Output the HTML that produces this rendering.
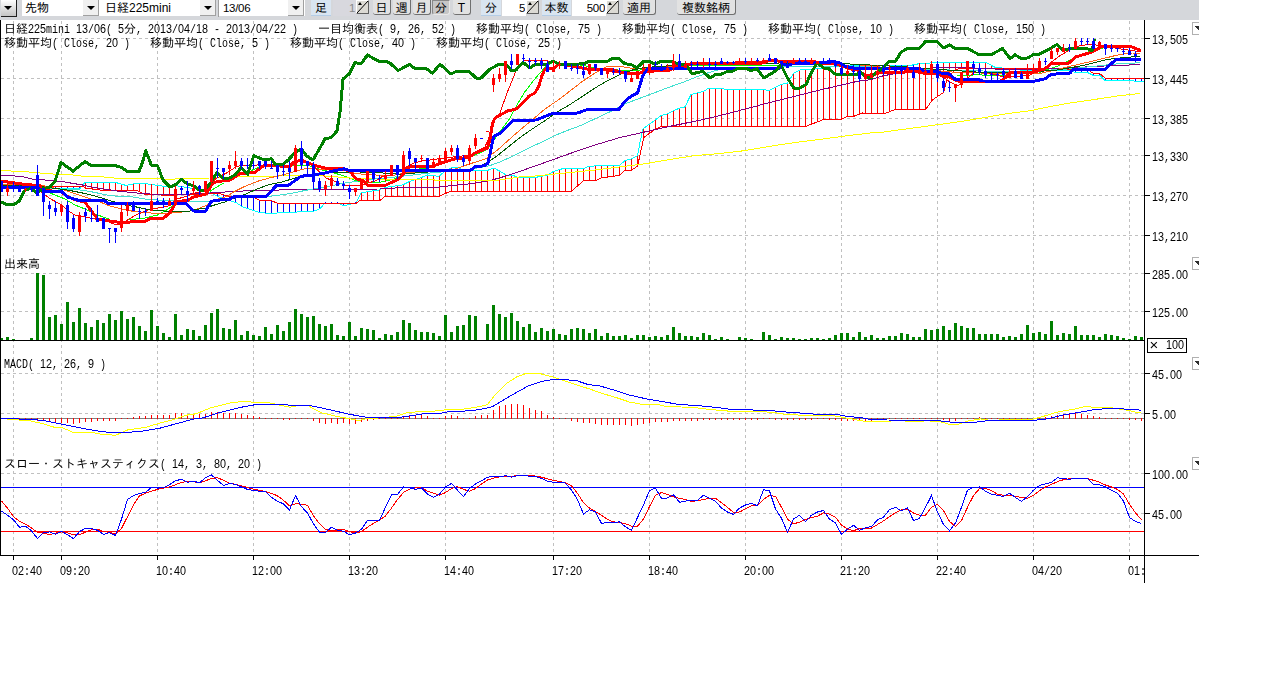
<!DOCTYPE html>
<html lang="ja">
<head>
<meta charset="utf-8">
<title>日経225mini チャート</title>
<style>
html,body{margin:0;padding:0;background:#fff;}
body{width:1280px;height:688px;overflow:hidden;position:relative;font-family:"Liberation Sans","IPAGothic",sans-serif;font-size:12px;color:#000;}
#tb{position:absolute;left:0;top:0;width:1199px;height:20px;background:#d5d7db;}
#tb span{opacity:0.999;display:inline-block;}
#tb div{position:absolute;box-sizing:border-box;white-space:nowrap;overflow:hidden;}
.cb{top:0;height:16px;background:#fff;line-height:17px;padding-left:3px;}
.db{top:0;height:16px;width:16px;background:#f0f0f0;border-right:1px solid #a0a0a0;border-bottom:1px solid #a0a0a0;}
.db:after,.d0:after{content:"";position:absolute;left:4px;top:6px;border-left:4px solid transparent;border-right:4px solid transparent;border-top:4px solid #000;}
.d0{left:1px;top:0;width:16px;height:17px;background:linear-gradient(#fff,#c4c4c4);border-right:1px solid #202020;border-bottom:1px solid #202020;}
.d0:after{left:3px;top:6px;}
.lb{top:0;height:16px;background:#d9e5f1;border-bottom:1px solid #b4cde6;text-align:center;line-height:17px;}
.bt{top:0;height:15px;background:#e2e2e2;border-right:1px solid #707070;border-bottom:1px solid #707070;border-radius:0 0 3px 3px;text-align:center;line-height:17px;}
.bt.on{background:#c6c6c6;border:1px solid #888;border-right-color:#e8e8e8;border-bottom-color:#e8e8e8;line-height:15px;}
.fd{top:0;height:16px;background:#fff;text-align:right;line-height:17px;padding-right:1px;}
.mono{font-family:"Liberation Sans","IPAGothic",sans-serif;letter-spacing:-0.3px;font-size:11.5px;}
.sp{top:0;width:13px;height:14px;background:#dcdad4;border:1px solid #606060;border-left-color:#fff;border-top-color:#fff;}
#chart{position:absolute;left:0;top:0;}
#chart text{white-space:pre;}
#chart .la{font-family:"Liberation Mono","IPAGothic",monospace;font-size:13px;}
#chart .dg{font-family:"Liberation Sans","IPAGothic",sans-serif;font-size:13px;}
#chart .cj{font-family:"Liberation Mono","IPAGothic",monospace;font-size:12px;}
</style>
</head>
<body>
<div id="tb">
<div class="d0"></div>
<div class="cb" style="left:22px;width:78px;"><span>先物</span></div><div class="db" style="left:83px;"></div>
<div class="cb" style="left:100px;width:116px;padding-left:5px;"><span>日経225mini</span></div><div class="db" style="left:200px;"></div>
<div style="left:218px;top:0;width:1px;height:17px;background:#a0a0a0;"></div>
<div class="cb mono" style="left:219px;width:86px;padding-left:4px;"><span>13/06</span></div><div class="db" style="left:288px;"></div>
<div class="lb" style="left:311px;width:20px;"><span>足</span></div>
<div class="fd mono" style="left:333px;width:23px;background:#d8d8de;color:#8a8a8a;"><span>1</span></div>
<div class="sp" style="left:356px;"><svg width="11" height="12" viewBox="0 0 11 12" style="display:block"><path d="M0 12L11 0" stroke="#000" fill="none"/><path d="M1 4l2-3l2 3z" fill="#000"/></svg></div>
<div class="bt" style="left:373px;width:18px;"><span>日</span></div>
<div class="bt" style="left:393px;width:18px;"><span>週</span></div>
<div class="bt" style="left:413px;width:18px;"><span>月</span></div>
<div class="bt on" style="left:432px;width:18px;"><span>分</span></div>
<div class="bt" style="left:453px;width:18px;"><span>T</span></div>
<div class="lb" style="left:481px;width:20px;"><span>分</span></div>
<div class="fd mono" style="left:502px;width:24px;"><span>5</span></div>
<div class="sp" style="left:526px;"><svg width="11" height="12" viewBox="0 0 11 12" style="display:block"><path d="M0 12L11 0" stroke="#000" fill="none"/><path d="M1 4l2-3l2 3z" fill="#000"/></svg></div>
<div class="lb" style="left:542px;width:29px;"><span>本数</span></div>
<div class="fd mono" style="left:572px;width:34px;"><span>500</span></div>
<div class="sp" style="left:606px;"><svg width="11" height="12" viewBox="0 0 11 12" style="display:block"><path d="M0 12L11 0" stroke="#000" fill="none"/><path d="M1 4l2-3l2 3z" fill="#000"/></svg></div>
<div class="bt" style="left:623px;width:33px;"><span>適用</span></div>
<div class="bt" style="left:677px;width:59px;"><span>複数銘柄</span></div>
</div>
<svg id="chart" width="1280" height="688" viewBox="0 0 1280 688">
<g shape-rendering="crispEdges" fill="none">
<g stroke="#c0c0c0" stroke-width="1" stroke-dasharray="3,3">
<line x1="13.5" y1="21" x2="13.5" y2="555"/>
<line x1="61.5" y1="21" x2="61.5" y2="555"/>
<line x1="157.5" y1="21" x2="157.5" y2="555"/>
<line x1="253.5" y1="21" x2="253.5" y2="555"/>
<line x1="349.5" y1="21" x2="349.5" y2="555"/>
<line x1="445.5" y1="21" x2="445.5" y2="555"/>
<line x1="553.5" y1="21" x2="553.5" y2="555"/>
<line x1="649.5" y1="21" x2="649.5" y2="555"/>
<line x1="745.5" y1="21" x2="745.5" y2="555"/>
<line x1="841.5" y1="21" x2="841.5" y2="555"/>
<line x1="937.5" y1="21" x2="937.5" y2="555"/>
<line x1="1033.5" y1="21" x2="1033.5" y2="555"/>
<line x1="1129.5" y1="21" x2="1129.5" y2="555"/>
<line x1="1" y1="38.5" x2="1144" y2="38.5"/>
<line x1="1" y1="78.5" x2="1144" y2="78.5"/>
<line x1="1" y1="118.5" x2="1144" y2="118.5"/>
<line x1="1" y1="155.5" x2="1144" y2="155.5"/>
<line x1="1" y1="195.5" x2="1144" y2="195.5"/>
<line x1="1" y1="235.5" x2="1144" y2="235.5"/>
<line x1="1" y1="273.5" x2="1144" y2="273.5"/>
<line x1="1" y1="311.5" x2="1144" y2="311.5"/>
<line x1="1" y1="373.5" x2="1144" y2="373.5"/>
<line x1="1" y1="413.5" x2="1144" y2="413.5"/>
<line x1="1" y1="473.5" x2="1144" y2="473.5"/>
<line x1="1" y1="513.5" x2="1144" y2="513.5"/>
</g>
<path d="M85.5 182V188M91.5 182V189M97.5 182V190M103.5 182V190M109.5 182V190M115.5 182V190M121.5 184V190M127.5 185V190M133.5 184V190M139.5 183V192M145.5 184V194M151.5 184V195M157.5 185V195M163.5 186V195M169.5 186V195M175.5 186V195M181.5 187V195M187.5 188V195M193.5 189V195M199.5 190V194M205.5 191V193M361.5 193V200M367.5 192V200M373.5 191V201M379.5 190V201M385.5 187V196M391.5 187V196M397.5 186V196M403.5 185V196M409.5 182V196M415.5 180V196M421.5 177V196M427.5 175V196M433.5 176V196M439.5 176V196M445.5 171V193M451.5 168V192M457.5 168V192M463.5 170V192M469.5 170V192M475.5 170V192M481.5 170V192M487.5 170V192M493.5 168V192M499.5 171V192M505.5 175V192M511.5 175V192M517.5 178V192M523.5 178V192M529.5 178V192M535.5 177V192M541.5 176V192M547.5 175V192M553.5 171V192M559.5 170V192M565.5 168V192M571.5 168V191M577.5 168V186M583.5 168V181M589.5 166V181M595.5 166V181M601.5 166V178M607.5 166V177M613.5 166V176M619.5 166V175M625.5 160V170M631.5 159V170M637.5 156V166M643.5 128V139M649.5 124V133M655.5 120V129M661.5 115V126M667.5 114V126M673.5 111V126M679.5 108V126M685.5 106V126M691.5 94V126M697.5 93V126M703.5 91V126M709.5 88V126M715.5 88V126M721.5 88V126M727.5 89V126M733.5 89V126M739.5 89V126M745.5 89V126M751.5 89V126M757.5 89V126M763.5 89V126M769.5 90V126M775.5 87V126M781.5 84V126M787.5 83V126M793.5 73V126M799.5 70V126M805.5 70V126M811.5 69V124M817.5 69V122M823.5 68V120M829.5 67V119M835.5 66V119M841.5 66V119M847.5 66V116M853.5 66V116M859.5 66V114M865.5 66V113M871.5 65V113M877.5 65V113M883.5 65V113M889.5 66V112M895.5 66V110M901.5 66V110M907.5 66V110M913.5 65V110M919.5 64V110M925.5 63V110M931.5 63V101M937.5 63V96M943.5 62V92M949.5 62V75M955.5 62V70M961.5 62V69M967.5 62V69M973.5 62V69M979.5 62V69M985.5 62V69M991.5 65V69M997.5 68V69" stroke="#f00" stroke-width="1"/>
<path d="M43.5 186V188M49.5 186V189M55.5 186V189M61.5 186V189M67.5 186V189M73.5 186V189M79.5 186V189M211.5 192V194M217.5 194V196M223.5 195V199M229.5 196V201M235.5 196V202M241.5 196V206M247.5 196V209M253.5 197V211M259.5 200V212M265.5 200V213M271.5 201V213M277.5 203V213M283.5 203V212M289.5 203V212M295.5 203V212M301.5 203V212M307.5 203V212M313.5 203V211M319.5 203V209M325.5 202V204M331.5 202V204M337.5 202V204M343.5 203V205M349.5 203V204M355.5 202V204M1003.5 68V70M1009.5 68V70M1015.5 68V70M1021.5 69V70M1027.5 69V70M1033.5 69V70M1039.5 69V71M1045.5 69V71M1051.5 69V71M1057.5 69V71M1063.5 69V71M1069.5 69V71M1075.5 69V72M1081.5 69V72M1087.5 69V72M1093.5 73V75M1099.5 74V76M1105.5 78V80M1111.5 78V80M1117.5 78V80M1123.5 78V80M1129.5 78V80M1135.5 78V81M1141.5 78V81" stroke="#00f" stroke-width="1"/>
<polyline points="1,185 25,188 62,189 80,188.5 85,182.5 115,182.2 120,183.8 126,185.4 138.8,183 151,184.4 163.8,186.3 175,185.6 195,188.8 207.5,191.3 217.5,196.3 227.5,200 236,202.5 242.5,206.9 251,209.8 258.8,212.3 270,213.6 282.5,212.5 312.5,211.5 320,208.8 325,203 337.5,203 343.8,205.6 356,203 361,193 370,191.3 378.8,190 385,187.5 402.5,185 408.8,181.9 420,178 427.5,175 438.8,176.3 445,171.3 451,168 457.5,167.5 463.8,170 475,170.4 487.5,170.4 493.8,168 500,171.3 506,175 512.5,175 517.5,177.5 535,177.5 547.5,175 553.8,171.3 565,168 570,168.5 583.8,168.5 588.8,166.3 601,165.6 619.4,165.6 625,160.6 631,159 637.5,155.6 640,142.5 643,128.8 650,123.8 656,119.4 661,115.6 667.5,113.8 673.8,110.6 680,108 685,106.9 691,94.4 703.8,91.3 708.8,88 720,88 725,89.4 763.8,89.4 768.8,90.6 775,87.5 781,84.4 787.5,83 793.8,73 800,70 812,69.4 823.8,68 836,66.3 870,65.4 882.5,65.4 907.5,66 920,63.5 940,62.5 986,62.5 995,67.3 1007.5,68.5 1020,70 1038.8,70.6 1070,70.6 1075,72.5 1087.5,72.5 1093.8,75.6 1100,75.6 1105,80.4 1132.5,80.4 1135,81.3 1144,81.3" stroke="#0ff" stroke-width="1"/>
<polyline points="1,184 42,186 83,186.5 85,188 100,190 120,190 136,190 145,194.4 161,195 175,195 195,194.5 210,193 220,193.8 228.8,196.3 252.5,196.5 258.8,200 271.3,200.6 277.5,203.3 356,203.3 360,200.4 380,200.6 385,196.3 438.8,196.3 450,191.5 571,191.5 583.8,180.6 596,180.6 601,178 619.4,175.3 625,170.3 631,170.3 637.5,166.3 640,155 643.8,137.5 650,133 656,128.8 661,126.5 806,126.3 823.8,119.4 841,119.4 847.5,116.3 853.8,116.3 862.5,113 885,113.5 895,109.5 925.6,109.5 932.5,99.8 943.8,92.3 947.5,77.3 955,69.8 960,68.5 1045,68.8 1087.5,69.4 1092.5,73 1100,73.8 1105,78 1144,78" stroke="#f00" stroke-width="1"/>
<polyline points="30,186 33,186.5 45,191 55,195 65,199 75,205 85,209 95,214 105,217.6 110,219.6" stroke="#0f0" stroke-width="1"/>
<polyline points="127.5,220 145,218 157.5,215 167.5,209.4 173.8,205" stroke="#0f0" stroke-width="1"/>
<polyline points="210,191.3 220,185 223.8,183" stroke="#0f0" stroke-width="1"/>
<polyline points="251,170.6 257.5,168 262,166.8" stroke="#0f0" stroke-width="1"/>
<polyline points="282.5,167 295,165.6 300,165.6 307.5,165 320,169.4 332.5,172.5 345,176.3 357.5,181.3 370,183 382.5,181.9 395,178.8 407.5,172.5 420,168.8 430,167.5 445,161 475,155 487.5,149.4 495,138.8 501,130 508.8,120 516,106.8 524,93 532.5,81.8 540,73 545,67.4 552.5,62.4" stroke="#0f0" stroke-width="1"/>
<polyline points="580,65 600,68.5 630,71 660,68 690,65.5 720,65.5 760,65.5 778,65.5" stroke="#0f0" stroke-width="1"/>
<polyline points="957.5,76 976,74.8 995,75.4 1010,75" stroke="#0f0" stroke-width="1"/>
<polyline points="1039,72.5 1057.5,66.3 1070,60 1082.5,53.8 1095,50 1107.5,46.9" stroke="#0f0" stroke-width="1"/>
<polyline points="1136,48 1141,49.6" stroke="#0f0" stroke-width="1"/>
<polyline points="1,175.3 10,175.6 22,176.6 32,179.1 40,179.6 52,180.6 64,181.9 74,183.6 83,185.1 95,187.6 108,189.6 118,191.1 128,192.1 132.5,192.5 145,193.8 161,194.4 190,194 220,192.5 232.5,191.3 270,190.2 307.5,189.4 380,189 395,188 430,187.3 435,187.5 451,185.6 470,183.8 490,180.6 507.5,175.6 520,171.3 532.5,166.9 545,162.5 557.5,158 570,153.5 595,145 620,137.5 645,131.9 670,126.3 695,121.3 720,115.6 730,113 770,102.5 820,90 857.5,81.3 870,79.8 882.5,76 895,73.5 920,69.8 935,67.3 957.5,67.3 995,69 1020,70 1070,67.8 1107.5,65.8 1140,64.6" stroke="#800080" stroke-width="1"/>
<polyline points="1,170.6 10,170.6 13,171.6 28,171.6 30,172.6 40,172.9 42,173.8 58,174.1 70,174.6 83,176.3 100,176.6 118,178.4 128,178.6 157.5,178.5 167.5,179.4 175,179 210,178 226,177.3 252.5,176.5 280,176 320,175.6 350,178 370,178.8 395,179.4 430,179.4 438.8,180.6 495,180.6 507.5,178.8 520,176.9 532.5,176.3 545,175 557.5,173.8 570,172.5 595,170 620,166.9 645,163.8 670,159.4 695,155.6 720,153.5 745,150.6 770,146.3 795,142.5 820,139.4 845,136 870,133 880,132.5 957.5,122 982.5,117.9 1007.5,113.5 1030,110.8 1045,107.5 1070,103 1095,99.4 1120,95.6 1140,93.5" stroke="#ff0" stroke-width="1"/>
<polyline points="1,184.5 40,185 64,190 76,194 90,198.6 100,202 110,206 120,208.6 128,210 132.5,211.3 145,212.5 161,213.8 172.5,213 188.8,211.3 197.5,208.8 206,205.6 215,200 227.5,196.3 232.5,192.5 245,186.3 257.5,181.3 270,177.8 282.5,175 295,171.3 307.5,168 320,169.4 345,170.6 357.5,173.8 376,175 395,175 407.5,172.5 430,171.3 454,169.4 470,163.8 486,158.8 497.5,150 510,138.8 520,130 531,121 545,109 557.5,100.5 570,91 582.5,81.3 595,73 606,66.9 620,66.3 635,68.8 660,67 700,64.5 740,63 780,61.5 820,62 850,64 880,67 920,69 952,72 995,73.5 1020,74 1039,73.8 1070,66.3 1095,60.6 1120,54.4 1132.5,53 1140,53" stroke="#ff6414" stroke-width="1"/>
<polyline points="1,182.5 30,185 43,193.5 50,198.6 60,204 70,212 75,215 85,217 95,219 105,220 115,224.6 120,225 127.5,220 136,215 145,211.3 150,209.4 161,207.5 170,205.6 176,199.4 186,196.3 195,193 200,192.5 207.5,188.8 211,185 215,179.4 220,176.3 227.5,172.5 235,167.5 240,165.6 257.5,165 280,165.6 289,165 295,160 307.5,162 314,166.3 320,172.5 326,178 332.5,180.6 345,185 357.5,185.6 364,184.4 370,182.5 376,180.6 382.5,176.3 390,175 401,171.3 407.5,166.3 413.8,163 426,160 430,160 445,158 470,155 485,147 492,130 495,120 499,115.5 507.5,91.8 516,71 524,61 545,60.5 557.5,63 570,66.8 580,68 600,70 625,74 640,72 655,68 675,65 690,63 720,62.5 765,61 780,60.5 815,62 840,65 855,70 865,75 875,73 900,72 920,71 940,75 950,82 958,86 965,80 975,72 985,72 1000,76 1015,77 1030,75 1045,67.5 1051,62.5 1061,55 1070,50 1080,45.6 1090,44.4 1101,45.6 1120,48.8 1132.5,50.6 1140,51.9" stroke="#f00" stroke-width="1"/>
<polyline points="1,186.5 40,187.5 64,189.5 80,190 90,191.5 100,193.5 110,195.6 120,196.5 132.5,196.9 145,199 157.5,200 170,200.3 191,201.5 210,201.5 216,200 233,197.5 267.5,196 270,196.3 288.8,193.8 307.5,190 325,186.9 345,183 365,180 390,177.5 407.5,175.6 430,173 470,169.4 490,165.6 500,161.9 512.5,156.3 532.5,146.3 545,140.6 557.5,134.4 570,129.4 580,125.8 595,118.8 611,111.3 625,103.8 645,96.3 670,86.9 682.5,82.5 695,77.5 707.5,73 717.5,70 740,68 800,66.5 860,66.5 900,68 950,70 1000,71.5 1020,71.9 1070,68.8 1095,66.2 1120,63.6 1140,62.8" stroke="#40e0d0" stroke-width="1"/>
<polyline points="1,185 40,186.5 56,188.5 70,190.5 85,193.5 95,196 105,199 113,201.6 125,205 136,206.9 145,208.8 157.5,210.6 172.5,211.5 189,211.4 196.3,209.3 204.7,208.5 210.4,206.4 216,204.5 224,202.3 232,199 245,194.4 257.5,188.8 270,184.4 282.5,181.9 295,178 307.5,175 330,172.5 357.5,171.9 382.5,173 401,174.4 420,172.5 470,169.4 485,163.8 495,157.5 507.5,147.5 520,137.5 532.5,128.8 545,120.6 557.5,111.8 570,104.5 582.5,96.3 595,88 607.5,80.6 620,74.4 632.5,70 645,67.5 680,65 720,64 780,63 840,63.5 870,65 900,66.5 940,69.5 976,72 1000,73 1030,72 1057.5,70 1082.5,65.6 1107.5,59.4 1120,58 1132.5,56.9 1140,56.3" stroke="#005a00" stroke-width="1"/>
<polyline points="1,181 25,184.5 40,185.6 43,190.5 61,191.5 68,197 78,200.5 85,202.2 92,212 97.6,218.9 108,220.7 120,222.5 145,221.3 150,218.8 163.8,218 170,212.5 175,204.4 177.5,201.3 187.5,200.6 192.5,197.5 206.3,193.8 210,187.5 213,182.5 220,181.3 230,180 235,176.9 240,173.8 246.3,173 254.4,172.5 258.8,169.4 263.8,165.6 270,165 282.5,166.3 289,167 295,162 301,160 307.5,162.5 315,165.6 325,168 342.5,168.8 350,171.3 356,178.8 362.5,180.6 367.5,185 386,185 390,183 396,180.6 400,177.5 404.4,172.5 407.5,167.5 412.5,166.3 420,166.9 432.5,166.5 438.8,163.8 445,161.9 455,158.8 468.8,157.5 475,153 487.5,148 490,138.8 492.5,123.5 495,118 507.5,111 516,109 524,101.8 529,96 535,93 539,85.5 542,75.5 545,69 554,68.6 557.5,64.5 570,64.4 576,66.9 588.8,69.4 612.5,70 625,73 640,73 650,71.3 670,70 676,66.9 686,66.3 691,63.8 720,63.5 763.8,63 770,60 776,60 780,61.9 815,61.9 820,63 836,63.8 845,66.9 850,68.8 857.5,70 865,75 873.8,75 877.5,72.9 901,72.9 906,71.6 920,71.6 925,73.5 937.5,73.5 943.8,76.6 948.8,76.6 955,79.8 960,81.6 1000,81.6 1003.8,79 1011,72.3 1020,72.5 1032.5,72.5 1045,68.8 1051,63.8 1068.8,63 1076,56.9 1092.5,51.9 1101,46.9 1105,46.3 1130,46.3 1141,50.6" stroke="#f00" stroke-width="3" stroke-linejoin="round"/>
<polyline points="1,187.3 36,187.3 43,191.1 61,191.1 68,197.1 78,200.2 103.3,200.2 108.3,203.3 186.3,203.5 193.8,211 205.6,211 211.3,201.3 220,200 228.8,199.8 233.8,196.9 266.3,196.5 276.3,185.6 288.8,185 301,176.3 312.5,175 325,173 335,170.6 343.8,168.8 350,170.6 470,170.6 475,166.9 485,165.6 488,163 490,153.8 492,143.8 493.8,136.3 501.3,132.5 513,120.6 536,120 551,114 570,113.5 577.5,113 587.5,109.4 618.8,109.4 625,101.3 631,96.3 637.5,93 640,85 642.5,76.3 647.5,68.8 778.8,68.5 782.5,63.8 787.5,65.6 795,63 813.8,63 823.8,62.5 832.5,61.3 840,63 845,66.3 857.5,68.8 920,68.8 925,71.6 936,71.6 942.5,73.5 948.8,74 956,79.8 978.8,79.8 982.5,81 1033.8,81.3 1045,78.8 1051,74.4 1070,73 1072.5,70 1105,69.4 1116,59.4 1141,59.4" stroke="#00f" stroke-width="3" stroke-linejoin="round"/>
<polyline points="1,202 7,204.7 13,205 19,201.2 25,190 31,188.6 37,193 43,188.6 49,187.5 55,181.5 61,162.5 73,171.1 85,161.5 91,165.5 115,165.5 121,167.3 127,171.3 139,171.3 142.5,162.5 145.6,150.6 151.3,165 157.5,165.6 163,180 170,186.9 175,185 181.3,179.4 187.5,183.8 193,185.6 199.4,190 205,190 211.3,181.9 217,172.5 223,178 229.4,178 235,175 241.3,167.5 247.5,174.4 253.8,155.6 259.4,158 265,160 271.3,158.8 275,164.4 282.5,165 288.8,159.4 295,152.5 301.3,148.8 307,156.3 313,160 318.8,150 325,138.8 331,137.5 337,131 340,112 343,79 349.4,73.8 355,62.5 361,63.8 367.5,55 378.8,61.3 386,61.3 390,63 398,70.6 409.4,64.4 415,68.5 426,68.5 432.5,73.3 440,64.2 451,74 457,71 468.8,71 476,78 481,78 490,69 498.8,64.5 506,64.5 512,71 516,70 523,62.4 530,68 535,64.5 546,64.5 553,61 559,64 570,64.4 583.8,63.8 588.8,61.3 607.5,61.3 612.5,58.5 618.8,58.5 625,63.8 631,64.4 637,67.8 643.8,61.3 648.8,61.3 655,64.4 661,61.3 672.5,61.3 678.8,64.4 686,65 692,73.8 703,71.3 710,78 715.6,74.4 721,74.4 727.5,71.3 732.5,71.3 738.8,68 745,68 751,70.6 757,68.8 763.8,78 775,71.3 781,65 787.5,78 793.8,88 800,88 806,84.4 812,71.3 817,63 823.8,68 828.8,68.8 835,74 857.5,74 860,71.3 865.6,77.5 871,78 875,73.5 882.5,68.5 888.8,61.6 895.6,61 901,52.3 907,48.5 919.4,48.5 925.6,41.3 937,41.3 943.8,47.9 949.4,44.8 955,48.5 967.5,48.5 979.4,54.8 991,54.8 1002.5,48.5 1010,58.5 1015,54.8 1021,58.5 1027.5,58 1033.8,54.4 1038.8,54.4 1050,48.8 1057,44.4 1063,50 1069.4,48.8 1075,48 1087.5,48.8 1092,50.5 1094.5,39" stroke="#008000" stroke-width="3" stroke-linejoin="round"/>
<path d="M7 182h1V196h-1zM6 188h3V192h-3zM25 188h1V192h-1zM24 189h3V190h-3zM61 204h1V216h-1zM60 205h3V212h-3zM79 212h1V236h-1zM78 215h3V232h-3zM121 205h1V232h-1zM120 212h3V228h-3zM127 202h1V216h-1zM126 205h3V211h-3zM151 184h1V211h-1zM150 201h3V211h-3zM169 198h1V205h-1zM168 201h3V205h-3zM175 188h1V205h-1zM174 189h3V205h-3zM193 181h1V195h-1zM192 188h3V191h-3zM205 181h1V195h-1zM204 181h3V192h-3zM211 161h1V185h-1zM210 161h3V182h-3zM229 161h1V175h-1zM228 165h3V169h-3zM235 151h1V169h-1zM234 161h3V166h-3zM295 145h1V172h-1zM294 148h3V172h-3zM325 181h1V196h-1zM324 185h3V189h-3zM331 175h1V189h-1zM330 178h3V186h-3zM355 188h1V196h-1zM354 188h3V192h-3zM361 179h1V189h-1zM360 182h3V189h-3zM367 171h1V182h-1zM366 171h3V182h-3zM385 171h1V182h-1zM384 175h3V179h-3zM391 165h1V176h-1zM390 165h3V176h-3zM403 151h1V172h-1zM402 155h3V172h-3zM421 155h1V161h-1zM420 158h3V159h-3zM433 158h1V168h-1zM432 162h3V168h-3zM439 155h1V164h-1zM438 159h3V164h-3zM445 148h1V161h-1zM444 151h3V161h-3zM451 145h1V155h-1zM450 148h3V152h-3zM469 145h1V165h-1zM468 148h3V161h-3zM475 134h1V149h-1zM474 138h3V146h-3zM487 131h1V132h-1zM486 131h3V132h-3zM493 74h1V92h-1zM492 78h3V85h-3zM499 68h1V82h-1zM498 74h3V79h-3zM505 61h1V82h-1zM504 61h3V75h-3zM517 54h1V65h-1zM516 54h3V65h-3zM553 61h1V72h-1zM552 67h3V72h-3zM559 61h1V69h-1zM558 64h3V65h-3zM589 64h1V75h-1zM588 64h3V74h-3zM607 68h1V78h-1zM606 68h3V74h-3zM631 75h1V82h-1zM630 78h3V82h-3zM637 71h1V79h-1zM636 71h3V79h-3zM643 64h1V71h-1zM642 68h3V71h-3zM649 64h1V75h-1zM648 64h3V71h-3zM667 64h1V72h-1zM666 68h3V71h-3zM673 54h1V71h-1zM672 61h3V68h-3zM685 61h1V68h-1zM684 64h3V68h-3zM703 58h1V68h-1zM702 62h3V65h-3zM739 58h1V64h-1zM738 62h3V64h-3zM751 58h1V64h-1zM750 61h3V64h-3zM763 58h1V62h-1zM762 60h3V61h-3zM793 58h1V64h-1zM792 61h3V64h-3zM811 58h1V64h-1zM810 61h3V64h-3zM817 61h1V64h-1zM816 61h3V64h-3zM847 65h1V75h-1zM846 71h3V74h-3zM865 65h1V79h-1zM864 74h3V79h-3zM871 65h1V78h-1zM870 75h3V78h-3zM877 65h1V75h-1zM876 71h3V75h-3zM889 65h1V72h-1zM888 68h3V69h-3zM907 65h1V75h-1zM906 68h3V72h-3zM919 63h1V75h-1zM918 70h3V74h-3zM925 63h1V76h-1zM924 71h3V75h-3zM931 61h1V75h-1zM930 64h3V75h-3zM955 84h1V102h-1zM954 84h3V88h-3zM961 72h1V88h-1zM960 72h3V85h-3zM967 61h1V78h-1zM966 61h3V75h-3zM1009 68h1V78h-1zM1008 72h3V78h-3zM1027 64h1V79h-1zM1026 72h3V79h-3zM1033 64h1V72h-1zM1032 68h3V72h-3zM1039 58h1V69h-1zM1038 61h3V69h-3zM1051 48h1V59h-1zM1050 51h3V59h-3zM1057 48h1V55h-1zM1056 48h3V52h-3zM1063 44h1V52h-1zM1062 48h3V52h-3zM1075 38h1V49h-1zM1074 41h3V49h-3zM1099 41h1V49h-1zM1098 42h3V49h-3z" fill="#f00"/>
<path d="M1 181h1V192h-1zM0 181h3V192h-3zM13 182h1V192h-1zM12 185h3V188h-3zM19 185h1V192h-1zM18 188h3V192h-3zM31 186h1V192h-1zM30 188h3V190h-3zM37 165h1V196h-1zM36 175h3V196h-3zM43 188h1V216h-1zM42 188h3V202h-3zM49 201h1V219h-1zM48 205h3V209h-3zM55 201h1V216h-1zM54 208h3V212h-3zM67 201h1V229h-1zM66 205h3V222h-3zM73 215h1V232h-1zM72 218h3V229h-3zM85 208h1V222h-1zM84 212h3V216h-3zM91 208h1V222h-1zM90 218h3V219h-3zM97 205h1V222h-1zM96 218h3V222h-3zM103 218h1V229h-1zM102 218h3V229h-3zM109 228h1V243h-1zM108 228h3V229h-3zM115 228h1V243h-1zM114 228h3V232h-3zM133 201h1V211h-1zM132 204h3V211h-3zM139 208h1V219h-1zM138 211h3V212h-3zM145 208h1V216h-1zM144 211h3V212h-3zM157 198h1V205h-1zM156 201h3V205h-3zM163 198h1V208h-1zM162 201h3V205h-3zM181 186h1V195h-1zM180 188h3V190h-3zM187 181h1V202h-1zM186 191h3V195h-3zM199 185h1V195h-1zM198 186h3V189h-3zM217 158h1V178h-1zM216 168h3V169h-3zM223 168h1V179h-1zM222 168h3V172h-3zM241 158h1V169h-1zM240 161h3V166h-3zM247 158h1V169h-1zM246 165h3V166h-3zM253 161h1V169h-1zM252 165h3V166h-3zM259 161h1V169h-1zM258 161h3V166h-3zM265 161h1V169h-1zM264 161h3V166h-3zM271 161h1V169h-1zM270 168h3V169h-3zM277 165h1V179h-1zM276 165h3V172h-3zM283 165h1V176h-1zM282 171h3V172h-3zM289 161h1V179h-1zM288 168h3V172h-3zM301 141h1V169h-1zM300 148h3V165h-3zM307 161h1V175h-1zM306 161h3V166h-3zM313 162h1V189h-1zM312 165h3V182h-3zM319 178h1V192h-1zM318 181h3V189h-3zM337 178h1V186h-1zM336 181h3V186h-3zM343 181h1V189h-1zM342 184h3V186h-3zM349 185h1V199h-1zM348 188h3V192h-3zM373 172h1V182h-1zM372 172h3V179h-3zM379 175h1V182h-1zM378 178h3V179h-3zM397 165h1V179h-1zM396 165h3V175h-3zM409 148h1V166h-1zM408 151h3V159h-3zM415 158h1V169h-1zM414 158h3V162h-3zM427 158h1V169h-1zM426 158h3V169h-3zM457 145h1V162h-1zM456 148h3V159h-3zM463 155h1V166h-1zM462 158h3V162h-3zM481 138h1V139h-1zM480 138h3V139h-3zM511 54h1V69h-1zM510 61h3V65h-3zM523 54h1V62h-1zM522 58h3V59h-3zM529 58h1V69h-1zM528 61h3V62h-3zM535 58h1V65h-1zM534 61h3V62h-3zM541 58h1V69h-1zM540 61h3V65h-3zM547 61h1V72h-1zM546 64h3V72h-3zM565 61h1V69h-1zM564 61h3V69h-3zM571 64h1V71h-1zM570 68h3V69h-3zM577 64h1V74h-1zM576 68h3V69h-3zM583 64h1V78h-1zM582 71h3V75h-3zM595 64h1V71h-1zM594 64h3V68h-3zM601 68h1V75h-1zM600 68h3V75h-3zM613 68h1V75h-1zM612 71h3V72h-3zM619 68h1V75h-1zM618 71h3V72h-3zM625 71h1V82h-1zM624 71h3V79h-3zM655 61h1V68h-1zM654 64h3V65h-3zM661 64h1V71h-1zM660 68h3V71h-3zM679 54h1V68h-1zM678 61h3V68h-3zM691 61h1V68h-1zM690 64h3V65h-3zM697 61h1V68h-1zM696 64h3V65h-3zM709 58h1V68h-1zM708 64h3V65h-3zM715 61h1V68h-1zM714 64h3V65h-3zM721 58h1V64h-1zM720 61h3V64h-3zM727 61h1V64h-1zM726 62h3V63h-3zM733 61h1V64h-1zM732 62h3V63h-3zM745 58h1V64h-1zM744 61h3V62h-3zM757 58h1V62h-1zM756 60h3V61h-3zM769 54h1V61h-1zM768 58h3V61h-3zM775 58h1V64h-1zM774 58h3V64h-3zM781 61h1V68h-1zM780 61h3V64h-3zM787 61h1V68h-1zM786 64h3V68h-3zM799 58h1V64h-1zM798 61h3V64h-3zM805 58h1V64h-1zM804 61h3V64h-3zM823 58h1V64h-1zM822 61h3V64h-3zM829 58h1V64h-1zM828 61h3V64h-3zM835 61h1V68h-1zM834 62h3V66h-3zM841 64h1V75h-1zM840 68h3V74h-3zM853 65h1V75h-1zM852 71h3V72h-3zM859 65h1V82h-1zM858 71h3V79h-3zM883 65h1V75h-1zM882 68h3V72h-3zM895 65h1V75h-1zM894 69h3V71h-3zM901 65h1V75h-1zM900 69h3V71h-3zM913 65h1V78h-1zM912 72h3V78h-3zM937 61h1V82h-1zM936 64h3V78h-3zM943 78h1V92h-1zM942 81h3V88h-3zM949 81h1V92h-1zM948 87h3V88h-3zM973 61h1V75h-1zM972 64h3V68h-3zM979 64h1V75h-1zM978 68h3V72h-3zM985 68h1V78h-1zM984 71h3V75h-3zM991 72h1V80h-1zM990 74h3V75h-3zM997 72h1V80h-1zM996 74h3V75h-3zM1003 68h1V78h-1zM1002 71h3V75h-3zM1015 68h1V78h-1zM1014 71h3V78h-3zM1021 72h1V79h-1zM1020 74h3V79h-3zM1045 58h1V65h-1zM1044 61h3V62h-3zM1069 44h1V52h-1zM1068 48h3V49h-3zM1081 38h1V45h-1zM1080 41h3V42h-3zM1087 38h1V45h-1zM1086 41h3V42h-3zM1093 38h1V49h-1zM1092 41h3V49h-3zM1105 44h1V55h-1zM1104 44h3V49h-3zM1111 44h1V52h-1zM1110 48h3V49h-3zM1117 48h1V52h-1zM1116 48h3V49h-3zM1123 48h1V55h-1zM1122 51h3V52h-3zM1129 48h1V55h-1zM1128 51h3V55h-3zM1135 51h1V62h-1zM1134 54h3V56h-3z" fill="#00f"/>
<path d="M0 338h3v2h-3zM6 337h3v3h-3zM12 339h3v1h-3zM30 338h3v2h-3zM36 273h3v67h-3zM42 275h3v65h-3zM48 317h3v23h-3zM54 315h3v25h-3zM60 324h3v16h-3zM66 302h3v38h-3zM72 322h3v18h-3zM78 308h3v32h-3zM84 323h3v17h-3zM90 327h3v13h-3zM96 320h3v20h-3zM102 323h3v17h-3zM108 314h3v26h-3zM114 320h3v20h-3zM120 311h3v29h-3zM126 319h3v21h-3zM132 317h3v23h-3zM138 326h3v14h-3zM144 331h3v9h-3zM150 310h3v30h-3zM156 326h3v14h-3zM162 333h3v7h-3zM168 337h3v3h-3zM174 314h3v26h-3zM180 335h3v5h-3zM186 329h3v11h-3zM192 330h3v10h-3zM198 336h3v4h-3zM204 325h3v15h-3zM210 313h3v27h-3zM216 309h3v31h-3zM222 328h3v12h-3zM228 329h3v11h-3zM234 320h3v20h-3zM240 335h3v5h-3zM246 331h3v9h-3zM252 335h3v5h-3zM258 336h3v4h-3zM264 327h3v13h-3zM270 334h3v6h-3zM276 325h3v15h-3zM282 331h3v9h-3zM288 322h3v18h-3zM294 309h3v31h-3zM300 314h3v26h-3zM306 317h3v23h-3zM312 316h3v24h-3zM318 324h3v16h-3zM324 326h3v14h-3zM330 324h3v16h-3zM336 335h3v5h-3zM342 336h3v4h-3zM348 322h3v18h-3zM354 336h3v4h-3zM360 328h3v12h-3zM366 329h3v11h-3zM372 330h3v10h-3zM378 338h3v2h-3zM384 334h3v6h-3zM390 335h3v5h-3zM396 332h3v8h-3zM402 320h3v20h-3zM408 323h3v17h-3zM414 330h3v10h-3zM420 332h3v8h-3zM426 332h3v8h-3zM432 333h3v7h-3zM438 336h3v4h-3zM444 315h3v25h-3zM450 332h3v8h-3zM456 326h3v14h-3zM462 325h3v15h-3zM468 315h3v25h-3zM474 316h3v24h-3zM486 324h3v16h-3zM492 305h3v35h-3zM498 314h3v26h-3zM504 317h3v23h-3zM510 313h3v27h-3zM516 321h3v19h-3zM522 327h3v13h-3zM528 324h3v16h-3zM534 332h3v8h-3zM540 328h3v12h-3zM546 331h3v9h-3zM552 329h3v11h-3zM558 334h3v6h-3zM564 335h3v5h-3zM570 329h3v11h-3zM576 328h3v12h-3zM582 329h3v11h-3zM588 333h3v7h-3zM594 329h3v11h-3zM600 336h3v4h-3zM606 333h3v7h-3zM612 336h3v4h-3zM618 336h3v4h-3zM624 335h3v5h-3zM630 338h3v2h-3zM636 335h3v5h-3zM642 335h3v5h-3zM648 337h3v3h-3zM654 336h3v4h-3zM660 337h3v3h-3zM666 335h3v5h-3zM672 327h3v13h-3zM678 333h3v7h-3zM684 336h3v4h-3zM690 336h3v4h-3zM696 337h3v3h-3zM702 333h3v7h-3zM708 335h3v5h-3zM714 339h3v1h-3zM720 337h3v3h-3zM726 339h3v1h-3zM738 337h3v3h-3zM744 338h3v2h-3zM750 339h3v1h-3zM762 332h3v8h-3zM768 335h3v5h-3zM774 339h3v1h-3zM780 337h3v3h-3zM786 338h3v2h-3zM792 338h3v2h-3zM798 339h3v1h-3zM804 339h3v1h-3zM810 338h3v2h-3zM816 338h3v2h-3zM822 339h3v1h-3zM828 338h3v2h-3zM834 335h3v5h-3zM840 333h3v7h-3zM846 333h3v7h-3zM852 337h3v3h-3zM858 332h3v8h-3zM864 337h3v3h-3zM870 335h3v5h-3zM876 338h3v2h-3zM882 338h3v2h-3zM888 336h3v4h-3zM894 336h3v4h-3zM900 333h3v7h-3zM906 334h3v6h-3zM912 337h3v3h-3zM918 337h3v3h-3zM924 329h3v11h-3zM930 330h3v10h-3zM936 329h3v11h-3zM942 326h3v14h-3zM948 330h3v10h-3zM954 323h3v17h-3zM960 326h3v14h-3zM966 328h3v12h-3zM972 328h3v12h-3zM978 334h3v6h-3zM984 334h3v6h-3zM990 334h3v6h-3zM996 334h3v6h-3zM1002 337h3v3h-3zM1008 336h3v4h-3zM1014 337h3v3h-3zM1020 334h3v6h-3zM1026 325h3v15h-3zM1032 333h3v7h-3zM1038 332h3v8h-3zM1044 334h3v6h-3zM1050 321h3v19h-3zM1056 335h3v5h-3zM1062 333h3v7h-3zM1068 334h3v6h-3zM1074 326h3v14h-3zM1080 335h3v5h-3zM1086 335h3v5h-3zM1092 335h3v5h-3zM1098 337h3v3h-3zM1104 334h3v6h-3zM1110 335h3v5h-3zM1116 336h3v4h-3zM1122 338h3v2h-3zM1128 339h3v1h-3zM1134 336h3v4h-3zM1140 337h3v3h-3z" fill="#008000"/>
<line x1="1" y1="340.5" x2="1144" y2="340.5" stroke="#000"/>
<line x1="1" y1="418.5" x2="1144" y2="418.5" stroke="#808080"/>
<path d="M7 418h1v2h-1zM13 418h1v2h-1zM19 418h1v2h-1zM25 418h1v2h-1zM31 418h1v2h-1zM37 418h1v3h-1zM43 418h1v3h-1zM49 418h1v4h-1zM55 418h1v5h-1zM61 418h1v5h-1zM67 418h1v5h-1zM73 418h1v6h-1zM79 418h1v5h-1zM85 418h1v4h-1zM91 418h1v4h-1zM97 418h1v3h-1zM103 418h1v3h-1zM109 418h1v3h-1zM115 418h1v3h-1zM121 418h1v1h-1zM127 418h1v1h-1zM133 417h1v2h-1zM139 416h1v3h-1zM145 416h1v3h-1zM151 415h1v4h-1zM157 415h1v4h-1zM163 415h1v4h-1zM169 415h1v4h-1zM175 413h1v6h-1zM181 413h1v6h-1zM187 414h1v5h-1zM193 414h1v5h-1zM199 414h1v5h-1zM205 414h1v5h-1zM211 412h1v7h-1zM217 412h1v7h-1zM223 413h1v6h-1zM229 413h1v6h-1zM235 413h1v6h-1zM241 414h1v5h-1zM247 415h1v4h-1zM253 416h1v3h-1zM259 417h1v2h-1zM265 418h1v1h-1zM271 418h1v1h-1zM277 418h1v1h-1zM283 418h1v2h-1zM289 418h1v2h-1zM295 418h1v1h-1zM301 418h1v1h-1zM307 418h1v1h-1zM313 418h1v3h-1zM319 418h1v5h-1zM325 418h1v6h-1zM331 418h1v5h-1zM337 418h1v6h-1zM343 418h1v5h-1zM349 418h1v6h-1zM355 418h1v6h-1zM361 418h1v4h-1zM367 418h1v3h-1zM373 418h1v2h-1zM379 418h1v1h-1zM385 418h1v1h-1zM391 418h1v1h-1zM397 418h1v1h-1zM403 416h1v3h-1zM409 415h1v4h-1zM415 415h1v4h-1zM421 415h1v4h-1zM427 416h1v3h-1zM433 418h1v1h-1zM439 418h1v1h-1zM445 416h1v3h-1zM451 415h1v4h-1zM457 416h1v3h-1zM463 418h1v1h-1zM469 418h1v1h-1zM475 416h1v3h-1zM481 415h1v4h-1zM487 415h1v4h-1zM493 410h1v9h-1zM499 406h1v13h-1zM505 405h1v14h-1zM511 404h1v15h-1zM517 404h1v15h-1zM523 405h1v14h-1zM529 408h1v11h-1zM535 410h1v9h-1zM541 411h1v8h-1zM547 415h1v4h-1zM553 417h1v2h-1zM559 418h1v1h-1zM565 418h1v1h-1zM571 418h1v3h-1zM577 418h1v4h-1zM583 418h1v5h-1zM589 418h1v5h-1zM595 418h1v6h-1zM601 418h1v7h-1zM607 418h1v7h-1zM613 418h1v7h-1zM619 418h1v7h-1zM625 418h1v7h-1zM631 418h1v8h-1zM637 418h1v7h-1zM643 418h1v6h-1zM649 418h1v5h-1zM655 418h1v4h-1zM661 418h1v4h-1zM667 418h1v4h-1zM673 418h1v3h-1zM679 418h1v3h-1zM685 418h1v3h-1zM691 418h1v3h-1zM697 418h1v3h-1zM703 418h1v2h-1zM709 418h1v2h-1zM715 418h1v2h-1zM721 418h1v2h-1zM727 418h1v2h-1zM733 418h1v2h-1zM739 418h1v2h-1zM745 418h1v2h-1zM751 418h1v2h-1zM757 418h1v2h-1zM763 418h1v1h-1zM769 418h1v1h-1zM775 418h1v2h-1zM781 418h1v2h-1zM787 418h1v2h-1zM793 418h1v2h-1zM799 418h1v2h-1zM805 418h1v2h-1zM811 418h1v2h-1zM817 418h1v1h-1zM823 418h1v1h-1zM829 418h1v2h-1zM835 418h1v2h-1zM841 418h1v3h-1zM847 418h1v3h-1zM853 418h1v3h-1zM859 418h1v3h-1zM865 418h1v3h-1zM871 418h1v3h-1zM877 418h1v2h-1zM883 418h1v2h-1zM889 418h1v1h-1zM895 418h1v1h-1zM901 418h1v1h-1zM907 418h1v1h-1zM913 418h1v1h-1zM919 418h1v1h-1zM925 418h1v1h-1zM931 418h1v1h-1zM937 418h1v1h-1zM943 418h1v2h-1zM949 418h1v3h-1zM955 418h1v3h-1zM961 418h1v1h-1zM967 418h1v1h-1zM973 418h1v1h-1zM979 417h1v2h-1zM985 418h1v1h-1zM991 418h1v1h-1zM997 418h1v1h-1zM1003 418h1v1h-1zM1009 418h1v1h-1zM1015 418h1v1h-1zM1021 418h1v1h-1zM1027 418h1v1h-1zM1033 418h1v1h-1zM1039 417h1v2h-1zM1045 417h1v2h-1zM1051 416h1v3h-1zM1057 415h1v4h-1zM1063 414h1v5h-1zM1069 414h1v5h-1zM1075 413h1v6h-1zM1081 414h1v5h-1zM1087 415h1v4h-1zM1093 416h1v3h-1zM1099 417h1v2h-1zM1105 418h1v1h-1zM1111 418h1v1h-1zM1117 418h1v1h-1zM1123 418h1v1h-1zM1129 418h1v2h-1zM1135 418h1v2h-1zM1141 418h1v3h-1z" fill="#f00"/>
<polyline points="0,418.4 15.6,419.7 31,421 44,424 55,427.5 62.5,427.8 73.4,432.5 94,432.8 101.5,434.2 115.6,435.3 128,429.8 145,427.5 158,423.6 172,420 187.5,415 196,413.8 211.6,407.5 232,402.5 247.6,401.3 253.8,402.5 267.9,402.5 280.4,405.3 289.8,407.2 296,405.9 308.5,405.9 321,412.7 336.6,416.3 346,418.1 358.5,420.5 367.9,418.4 383.5,417.8 392,416.6 398.3,415.8 407.6,412.3 431,411.4 448.3,409.5 460.8,409.5 476.4,407.2 487.3,404.8 495.1,394.7 506,383.8 517,376.7 526.4,373.3 538.9,373.3 554.5,377.5 567,381.7 582.6,386.9 588,388.4 602,393.4 616,397.5 630,402.2 642.7,404.4 656.8,404.4 666,406.4 694,407.5 710,409.5 728.6,411.1 760,411.4 775.5,412.7 784,414.2 802.8,415.3 834,415.8 851,418.9 865,421.3 890,421.3 893,420.5 912,421.3 927.8,420.9 940,421.6 949.6,424.4 957.4,424.4 968.4,420.9 977.8,419.4 980,418.9 991,420.5 1008,419.4 1031.6,419.4 1042.5,416.6 1058,411.9 1073.8,409.2 1086,406.4 1092.5,407.2 1108,407.2 1117.5,408.8 1128.4,410.3 1136,412.3 1141,412.3" stroke="#ff0" stroke-width="1"/>
<polyline points="0,418.4 31,419.4 44,420.6 59,423.6 78,427.5 101.5,431.7 115.6,432.7 129.7,432.2 140.6,431.4 159.4,428.3 179.7,422.8 196,418.4 202,418.1 219.4,412.7 242.9,406.9 256.9,404.4 286.6,404.4 289.8,405.6 310,405.6 328.8,409.5 349,414.2 366.3,417.3 392,417.7 399.8,417.3 407.6,416.3 423.3,413.8 442,413.1 449.8,411.4 463.9,411.1 478,409.8 492,406.9 501.4,401.3 515.4,393 528,386.1 542,381.4 553,379.4 562.3,379.4 576.4,380.6 588,384.5 600.5,386.1 614.6,390.3 630,395.2 647.4,399.1 663,401.7 678.6,404.4 697.4,405.6 717.7,407.5 731.8,409.5 747.4,409.8 770.8,410.6 784,411.9 796.5,412.7 815,414.2 838.7,414.7 846.5,416.3 862,417.8 871.5,419.7 887,420 937,420.5 954.3,422.5 974.6,422.5 980,421.3 994,420.5 1033,420.5 1047,418.9 1062.8,415 1081.6,411.9 1097,409.2 1105,408.9 1117.5,408.3 1127,409.3 1137.8,409.5 1141,410.6" stroke="#00f" stroke-width="1"/>
<line x1="1" y1="487.5" x2="1144" y2="487.5" stroke="#00f"/>
<line x1="1" y1="531.5" x2="1144" y2="531.5" stroke="#f00"/>
<polyline points="1.5,501.1 7.5,508.1 13.5,516.7 19.5,521.4 25.5,524.1 31.5,528.1 37.5,532.3 43.5,533.1 49.5,534.7 55.5,533.1 61.5,531.9 67.5,532.8 73.5,534.7 79.5,534.4 85.5,532.3 91.5,529.7 97.5,529.2 103.5,531.6 109.5,532.3 115.5,533.9 121.5,528.4 127.5,516.7 133.5,504.7 139.5,495.9 145.5,493.3 151.5,491.2 157.5,489.4 163.5,488.1 169.5,487 175.5,484.7 181.5,482.3 187.5,481.6 193.5,481.6 199.5,482.8 205.5,480.8 211.5,478.4 217.5,477.7 223.5,480.3 229.5,483.1 235.5,484.4 241.5,485.9 247.5,487.5 253.5,489.1 259.5,490.2 265.5,491.7 271.5,493.3 277.5,495.9 283.5,500.3 289.5,505.8 295.5,503.8 301.5,504.2 307.5,505.3 313.5,515.9 319.5,523.8 325.5,529.2 331.5,530.8 337.5,530 343.5,529.5 349.5,531.6 355.5,533.1 361.5,531.6 367.5,527.2 373.5,523.3 379.5,520.3 385.5,515.9 391.5,508.1 397.5,499.5 403.5,492.5 409.5,489.1 415.5,487.8 421.5,487.8 427.5,491.2 433.5,493.3 439.5,495.3 445.5,492.5 451.5,488.6 457.5,486.6 463.5,489.4 469.5,491.2 475.5,488.6 481.5,483.9 487.5,480 493.5,478.1 499.5,476.9 505.5,476.1 511.5,476.4 517.5,475.6 523.5,475.3 529.5,475.3 535.5,476.1 541.5,477.2 547.5,478.8 553.5,480.3 559.5,481.6 565.5,482.8 571.5,485.9 577.5,493.3 583.5,502.7 589.5,508.1 595.5,511.6 601.5,515.2 607.5,519.4 613.5,521.9 619.5,522.5 625.5,523.8 631.5,526.1 637.5,526.1 643.5,519.1 649.5,506.6 655.5,495.3 661.5,492.5 667.5,494.4 673.5,496.9 679.5,498.4 685.5,499.5 691.5,501.4 697.5,500.6 703.5,499.5 709.5,498.4 715.5,498.4 721.5,502.7 727.5,507.3 733.5,512.5 739.5,512 745.5,508.9 751.5,505.8 757.5,505.3 763.5,499.5 769.5,495.3 775.5,496.4 781.5,507.3 787.5,519.1 793.5,523.8 799.5,522.2 805.5,519.4 811.5,517.5 817.5,516.2 823.5,512.8 829.5,514.1 835.5,517.2 841.5,525.3 847.5,528.8 853.5,530.8 859.5,528.4 865.5,528.1 871.5,528.1 877.5,524.5 883.5,520.9 889.5,516.7 895.5,512.8 901.5,509.7 907.5,508.9 913.5,513.1 919.5,515.2 925.5,515.2 931.5,507.3 937.5,504.2 943.5,510.5 949.5,521.4 955.5,526.6 961.5,520.6 967.5,507.3 973.5,495.6 979.5,488.6 985.5,488.6 991.5,490.6 997.5,494.1 1003.5,495.3 1009.5,495.3 1015.5,496.4 1021.5,497.5 1027.5,498.4 1033.5,495.3 1039.5,490.6 1045.5,487 1051.5,484.4 1057.5,481.6 1063.5,479.7 1069.5,478.8 1075.5,478.4 1081.5,478.4 1087.5,478.4 1093.5,480.3 1099.5,482.3 1105.5,485 1111.5,487 1117.5,489.4 1123.5,494.1 1129.5,504.2 1135.5,512.8 1141.5,519.8" stroke="#f00" stroke-width="1"/>
<polyline points="1.5,511.2 7.5,515.2 13.5,519.8 19.5,527.2 25.5,526.1 31.5,530.8 37.5,538.6 43.5,532.7 49.5,531.9 55.5,534.2 61.5,531.2 67.5,534.7 73.5,538.6 79.5,531.6 85.5,528.4 91.5,528.4 97.5,530.3 103.5,534.4 109.5,532.7 115.5,535.5 121.5,519.1 127.5,499.5 133.5,495.6 139.5,493.3 145.5,492.5 151.5,487.5 157.5,488.1 163.5,487.8 169.5,484.7 175.5,480.8 181.5,479.2 187.5,482.3 193.5,481.2 199.5,482.8 205.5,477.7 211.5,475 217.5,480.3 223.5,485.5 229.5,483.4 235.5,484.4 241.5,487 247.5,489.4 253.5,490.5 259.5,491.2 265.5,491.7 271.5,497.2 277.5,501.4 283.5,503.8 289.5,510 295.5,495.6 301.5,506.6 307.5,513.1 313.5,523.8 319.5,532.3 325.5,532.3 331.5,527.2 337.5,530.3 343.5,531.2 349.5,534.7 355.5,533.1 361.5,529.2 367.5,520.3 373.5,520.3 379.5,520.3 385.5,507.3 391.5,494.8 397.5,494.4 403.5,487 409.5,487.8 415.5,489.4 421.5,487.8 427.5,494.1 433.5,497.2 439.5,494.1 445.5,487 451.5,483.4 457.5,490.2 463.5,496.4 469.5,488.6 475.5,483.9 481.5,480.8 487.5,477.2 493.5,476.1 499.5,476.9 505.5,475.6 511.5,477.2 517.5,475.6 523.5,475.6 529.5,476.1 535.5,476.4 541.5,478.4 547.5,481.2 553.5,482.3 559.5,482.3 565.5,483.1 571.5,490.2 577.5,499.5 583.5,514.1 589.5,509.7 595.5,512 601.5,523.4 607.5,522.5 613.5,522.5 619.5,521.9 625.5,526.9 631.5,530.3 637.5,517.5 643.5,505 649.5,490.6 655.5,488.1 661.5,498.4 667.5,498 673.5,494.8 679.5,502.2 685.5,501.1 691.5,500.3 697.5,500.3 703.5,495.3 709.5,498.4 715.5,501.1 721.5,508.1 727.5,512 733.5,514.4 739.5,508.1 745.5,505 751.5,503.4 757.5,505.8 763.5,489.7 769.5,490.9 775.5,508.9 781.5,518.3 787.5,532.3 793.5,519.1 799.5,515.2 805.5,521.4 811.5,515.2 817.5,512 823.5,510.5 829.5,519.1 835.5,523 841.5,534.4 847.5,529.2 853.5,525.3 859.5,530.3 865.5,527.7 871.5,526.6 877.5,519.8 883.5,517.2 889.5,509.7 895.5,507.3 901.5,510.9 907.5,507.8 913.5,520.6 919.5,518.3 925.5,507.3 931.5,495.6 937.5,512 943.5,524.5 949.5,530.8 955.5,523 961.5,507.3 967.5,490.2 973.5,487.5 979.5,487 985.5,491.2 991.5,494.1 997.5,495.3 1003.5,496.4 1009.5,493.3 1015.5,497.5 1021.5,501.4 1027.5,496.4 1033.5,490.2 1039.5,485.5 1045.5,483.9 1051.5,482.3 1057.5,477.7 1063.5,478.8 1069.5,479.2 1075.5,478.4 1081.5,478.4 1087.5,478.4 1093.5,484.4 1099.5,484.7 1105.5,487 1111.5,490.2 1117.5,493.3 1123.5,501.1 1129.5,517.5 1135.5,521.4 1141.5,523.4" stroke="#00f" stroke-width="1"/>
<g stroke="#000" stroke-width="1">
<line x1="0.5" y1="20" x2="0.5" y2="556"/>
<line x1="0" y1="555.5" x2="1199" y2="555.5"/>
<line x1="1144.5" y1="20" x2="1144.5" y2="583"/>
<line x1="1145" y1="38.5" x2="1150" y2="38.5"/>
<line x1="1145" y1="78.5" x2="1150" y2="78.5"/>
<line x1="1145" y1="118.5" x2="1150" y2="118.5"/>
<line x1="1145" y1="155.5" x2="1150" y2="155.5"/>
<line x1="1145" y1="195.5" x2="1150" y2="195.5"/>
<line x1="1145" y1="235.5" x2="1150" y2="235.5"/>
<line x1="1145" y1="273.5" x2="1150" y2="273.5"/>
<line x1="1145" y1="311.5" x2="1150" y2="311.5"/>
<line x1="1145" y1="373.5" x2="1150" y2="373.5"/>
<line x1="1145" y1="413.5" x2="1150" y2="413.5"/>
<line x1="1145" y1="473.5" x2="1150" y2="473.5"/>
<line x1="1145" y1="513.5" x2="1150" y2="513.5"/>
<line x1="13.5" y1="556" x2="13.5" y2="560"/>
<line x1="61.5" y1="556" x2="61.5" y2="560"/>
<line x1="157.5" y1="556" x2="157.5" y2="560"/>
<line x1="253.5" y1="556" x2="253.5" y2="560"/>
<line x1="349.5" y1="556" x2="349.5" y2="560"/>
<line x1="445.5" y1="556" x2="445.5" y2="560"/>
<line x1="553.5" y1="556" x2="553.5" y2="560"/>
<line x1="649.5" y1="556" x2="649.5" y2="560"/>
<line x1="745.5" y1="556" x2="745.5" y2="560"/>
<line x1="841.5" y1="556" x2="841.5" y2="560"/>
<line x1="937.5" y1="556" x2="937.5" y2="560"/>
<line x1="1033.5" y1="556" x2="1033.5" y2="560"/>
<line x1="1129.5" y1="556" x2="1129.5" y2="560"/>
</g>
<rect x="1147.5" y="338.5" width="39" height="14" fill="#fff" stroke="#000"/>
<path d="M1199 22.5H1192.5V34.5H1199" stroke="#b0b0b0" fill="#fff"/>
<path d="M1194 26h5v5z" fill="#303030" stroke="none"/>
<path d="M1199 257.5H1192.5V269.5H1199" stroke="#b0b0b0" fill="#fff"/>
<path d="M1194 261h5v5z" fill="#303030" stroke="none"/>
<path d="M1199 357.5H1192.5V369.5H1199" stroke="#b0b0b0" fill="#fff"/>
<path d="M1194 361h5v5z" fill="#303030" stroke="none"/>
<path d="M1199 457.5H1192.5V469.5H1199" stroke="#b0b0b0" fill="#fff"/>
<path d="M1194 461h5v5z" fill="#303030" stroke="none"/>
</g>
<g style="opacity:0.999" fill="#000">
<text x="4" y="32.5" class="cj">日経</text><text transform="translate(28,33) scale(0.8299,1)" class="dg">225</text><text transform="translate(46,33) scale(0.7691,1)" class="la">mini</text><text transform="translate(76,33) scale(0.8299,1)" class="dg">13</text><text transform="translate(88,33) scale(0.7691,1)" class="la">/</text><text transform="translate(94,33) scale(0.8299,1)" class="dg">06</text><text transform="translate(106,33) scale(0.7691,1)" class="la">(</text><text transform="translate(118,33) scale(0.8299,1)" class="dg">5</text><text x="124" y="32.5" class="cj">分</text><text transform="translate(136,33) scale(0.7691,1)" class="la">,</text><text transform="translate(148,33) scale(0.8299,1)" class="dg">2013</text><text transform="translate(172,33) scale(0.7691,1)" class="la">/</text><text transform="translate(178,33) scale(0.8299,1)" class="dg">04</text><text transform="translate(190,33) scale(0.7691,1)" class="la">/</text><text transform="translate(196,33) scale(0.8299,1)" class="dg">18</text><text transform="translate(214,33) scale(0.7691,1)" class="la">-</text><text transform="translate(226,33) scale(0.8299,1)" class="dg">2013</text><text transform="translate(250,33) scale(0.7691,1)" class="la">/</text><text transform="translate(256,33) scale(0.8299,1)" class="dg">04</text><text transform="translate(268,33) scale(0.7691,1)" class="la">/</text><text transform="translate(274,33) scale(0.8299,1)" class="dg">22</text><text transform="translate(292,33) scale(0.7691,1)" class="la">)</text>
<text x="318" y="32.5" class="cj">一目均衡表</text><text transform="translate(378,33) scale(0.7691,1)" class="la">(</text><text transform="translate(390,33) scale(0.8299,1)" class="dg">9</text><text transform="translate(396,33) scale(0.7691,1)" class="la">,</text><text transform="translate(408,33) scale(0.8299,1)" class="dg">26</text><text transform="translate(420,33) scale(0.7691,1)" class="la">,</text><text transform="translate(432,33) scale(0.8299,1)" class="dg">52</text><text transform="translate(450,33) scale(0.7691,1)" class="la">)</text>
<text x="476" y="32.5" class="cj">移動平均</text><text transform="translate(524,33) scale(0.7691,1)" class="la">( Close,</text><text transform="translate(578,33) scale(0.8299,1)" class="dg">75</text><text transform="translate(596,33) scale(0.7691,1)" class="la">)</text>
<text x="622" y="32.5" class="cj">移動平均</text><text transform="translate(670,33) scale(0.7691,1)" class="la">( Close,</text><text transform="translate(724,33) scale(0.8299,1)" class="dg">75</text><text transform="translate(742,33) scale(0.7691,1)" class="la">)</text>
<text x="768" y="32.5" class="cj">移動平均</text><text transform="translate(816,33) scale(0.7691,1)" class="la">( Close,</text><text transform="translate(870,33) scale(0.8299,1)" class="dg">10</text><text transform="translate(888,33) scale(0.7691,1)" class="la">)</text>
<text x="914" y="32.5" class="cj">移動平均</text><text transform="translate(962,33) scale(0.7691,1)" class="la">( Close,</text><text transform="translate(1016,33) scale(0.8299,1)" class="dg">150</text><text transform="translate(1040,33) scale(0.7691,1)" class="la">)</text>
<text x="4" y="46.5" class="cj">移動平均</text><text transform="translate(52,47) scale(0.7691,1)" class="la">( Close,</text><text transform="translate(106,47) scale(0.8299,1)" class="dg">20</text><text transform="translate(124,47) scale(0.7691,1)" class="la">)</text>
<text x="150" y="46.5" class="cj">移動平均</text><text transform="translate(198,47) scale(0.7691,1)" class="la">( Close,</text><text transform="translate(252,47) scale(0.8299,1)" class="dg">5</text><text transform="translate(264,47) scale(0.7691,1)" class="la">)</text>
<text x="290" y="46.5" class="cj">移動平均</text><text transform="translate(338,47) scale(0.7691,1)" class="la">( Close,</text><text transform="translate(392,47) scale(0.8299,1)" class="dg">40</text><text transform="translate(410,47) scale(0.7691,1)" class="la">)</text>
<text x="436" y="46.5" class="cj">移動平均</text><text transform="translate(484,47) scale(0.7691,1)" class="la">( Close,</text><text transform="translate(538,47) scale(0.8299,1)" class="dg">25</text><text transform="translate(556,47) scale(0.7691,1)" class="la">)</text>
<text x="4" y="267.5" class="cj">出来高</text>
<text transform="translate(4,368) scale(0.7691,1)" class="la">MACD(</text><text transform="translate(40,368) scale(0.8299,1)" class="dg">12</text><text transform="translate(52,368) scale(0.7691,1)" class="la">,</text><text transform="translate(64,368) scale(0.8299,1)" class="dg">26</text><text transform="translate(76,368) scale(0.7691,1)" class="la">,</text><text transform="translate(88,368) scale(0.8299,1)" class="dg">9</text><text transform="translate(100,368) scale(0.7691,1)" class="la">)</text>
<text x="4" y="467.5" class="cj">スロー・ストキャスティクス</text><text transform="translate(160,468) scale(0.7691,1)" class="la">(</text><text transform="translate(172,468) scale(0.8299,1)" class="dg">14</text><text transform="translate(184,468) scale(0.7691,1)" class="la">,</text><text transform="translate(196,468) scale(0.8299,1)" class="dg">3</text><text transform="translate(202,468) scale(0.7691,1)" class="la">,</text><text transform="translate(214,468) scale(0.8299,1)" class="dg">80</text><text transform="translate(226,468) scale(0.7691,1)" class="la">,</text><text transform="translate(238,468) scale(0.8299,1)" class="dg">20</text><text transform="translate(256,468) scale(0.7691,1)" class="la">)</text>
<text transform="translate(1152,44) scale(0.8299,1)" class="dg">13</text><text transform="translate(1164,44) scale(0.7691,1)" class="la">,</text><text transform="translate(1170,44) scale(0.8299,1)" class="dg">505</text>
<text transform="translate(1152,84) scale(0.8299,1)" class="dg">13</text><text transform="translate(1164,84) scale(0.7691,1)" class="la">,</text><text transform="translate(1170,84) scale(0.8299,1)" class="dg">445</text>
<text transform="translate(1152,124) scale(0.8299,1)" class="dg">13</text><text transform="translate(1164,124) scale(0.7691,1)" class="la">,</text><text transform="translate(1170,124) scale(0.8299,1)" class="dg">385</text>
<text transform="translate(1152,161) scale(0.8299,1)" class="dg">13</text><text transform="translate(1164,161) scale(0.7691,1)" class="la">,</text><text transform="translate(1170,161) scale(0.8299,1)" class="dg">330</text>
<text transform="translate(1152,201) scale(0.8299,1)" class="dg">13</text><text transform="translate(1164,201) scale(0.7691,1)" class="la">,</text><text transform="translate(1170,201) scale(0.8299,1)" class="dg">270</text>
<text transform="translate(1152,241) scale(0.8299,1)" class="dg">13</text><text transform="translate(1164,241) scale(0.7691,1)" class="la">,</text><text transform="translate(1170,241) scale(0.8299,1)" class="dg">210</text>
<text transform="translate(1152,279) scale(0.8299,1)" class="dg">285</text><text transform="translate(1170,279) scale(0.7691,1)" class="la">.</text><text transform="translate(1176,279) scale(0.8299,1)" class="dg">00</text>
<text transform="translate(1152,317) scale(0.8299,1)" class="dg">125</text><text transform="translate(1170,317) scale(0.7691,1)" class="la">.</text><text transform="translate(1176,317) scale(0.8299,1)" class="dg">00</text>
<text transform="translate(1152,379) scale(0.8299,1)" class="dg">45</text><text transform="translate(1164,379) scale(0.7691,1)" class="la">.</text><text transform="translate(1170,379) scale(0.8299,1)" class="dg">00</text>
<text transform="translate(1152,419) scale(0.8299,1)" class="dg">5</text><text transform="translate(1158,419) scale(0.7691,1)" class="la">.</text><text transform="translate(1164,419) scale(0.8299,1)" class="dg">00</text>
<text transform="translate(1152,479) scale(0.8299,1)" class="dg">100</text><text transform="translate(1170,479) scale(0.7691,1)" class="la">.</text><text transform="translate(1176,479) scale(0.8299,1)" class="dg">00</text>
<text transform="translate(1152,519) scale(0.8299,1)" class="dg">45</text><text transform="translate(1164,519) scale(0.7691,1)" class="la">.</text><text transform="translate(1170,519) scale(0.8299,1)" class="dg">00</text>
<text x="1149.5" y="349.5" class="dg" style="font-size:15px">×</text>
<text transform="translate(1166,349) scale(0.8299,1)" class="dg">100</text>
<text transform="translate(12,575) scale(0.8299,1)" class="dg">02</text><text transform="translate(24,575) scale(0.7691,1)" class="la">:</text><text transform="translate(30,575) scale(0.8299,1)" class="dg">40</text>
<text transform="translate(60,575) scale(0.8299,1)" class="dg">09</text><text transform="translate(72,575) scale(0.7691,1)" class="la">:</text><text transform="translate(78,575) scale(0.8299,1)" class="dg">20</text>
<text transform="translate(156,575) scale(0.8299,1)" class="dg">10</text><text transform="translate(168,575) scale(0.7691,1)" class="la">:</text><text transform="translate(174,575) scale(0.8299,1)" class="dg">40</text>
<text transform="translate(252,575) scale(0.8299,1)" class="dg">12</text><text transform="translate(264,575) scale(0.7691,1)" class="la">:</text><text transform="translate(270,575) scale(0.8299,1)" class="dg">00</text>
<text transform="translate(348,575) scale(0.8299,1)" class="dg">13</text><text transform="translate(360,575) scale(0.7691,1)" class="la">:</text><text transform="translate(366,575) scale(0.8299,1)" class="dg">20</text>
<text transform="translate(444,575) scale(0.8299,1)" class="dg">14</text><text transform="translate(456,575) scale(0.7691,1)" class="la">:</text><text transform="translate(462,575) scale(0.8299,1)" class="dg">40</text>
<text transform="translate(552,575) scale(0.8299,1)" class="dg">17</text><text transform="translate(564,575) scale(0.7691,1)" class="la">:</text><text transform="translate(570,575) scale(0.8299,1)" class="dg">20</text>
<text transform="translate(648,575) scale(0.8299,1)" class="dg">18</text><text transform="translate(660,575) scale(0.7691,1)" class="la">:</text><text transform="translate(666,575) scale(0.8299,1)" class="dg">40</text>
<text transform="translate(744,575) scale(0.8299,1)" class="dg">20</text><text transform="translate(756,575) scale(0.7691,1)" class="la">:</text><text transform="translate(762,575) scale(0.8299,1)" class="dg">00</text>
<text transform="translate(840,575) scale(0.8299,1)" class="dg">21</text><text transform="translate(852,575) scale(0.7691,1)" class="la">:</text><text transform="translate(858,575) scale(0.8299,1)" class="dg">20</text>
<text transform="translate(936,575) scale(0.8299,1)" class="dg">22</text><text transform="translate(948,575) scale(0.7691,1)" class="la">:</text><text transform="translate(954,575) scale(0.8299,1)" class="dg">40</text>
<text transform="translate(1032,575) scale(0.8299,1)" class="dg">04</text><text transform="translate(1044,575) scale(0.7691,1)" class="la">/</text><text transform="translate(1050,575) scale(0.8299,1)" class="dg">20</text>
<text transform="translate(1128,575) scale(0.8299,1)" class="dg">01</text><text transform="translate(1140,575) scale(0.7691,1)" class="la">:</text>
</g>
</svg>
</body>
</html>
